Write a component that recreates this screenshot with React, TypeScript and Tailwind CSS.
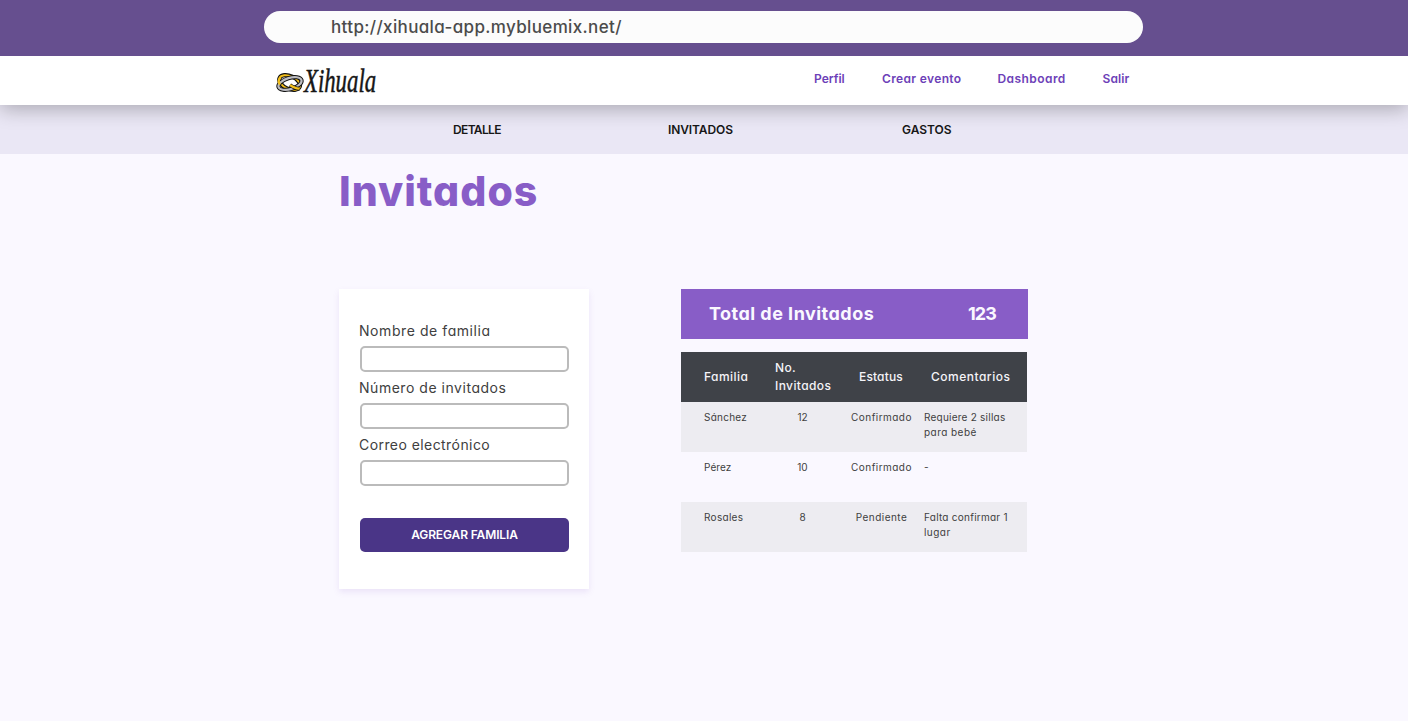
function RingsLogo() {
  return (
    <svg className="h-[42px] w-[116px]" viewBox="0 0 116 42" aria-label="Xihuala">
      <g fill="none" transform="translate(0 3.500)">
        <ellipse cx="14.6" cy="19" rx="11" ry="6.4" stroke="#111" strokeWidth="4.2" transform="rotate(24 14.6 19)" />
        <ellipse cx="14.6" cy="19" rx="11" ry="6.4" stroke="#f3bf1b" strokeWidth="2" transform="rotate(24 14.6 19)" />
        <ellipse cx="15" cy="20" rx="12" ry="5.6" stroke="#111" strokeWidth="4.2" transform="rotate(-17 15 20)" />
        <ellipse cx="15" cy="20" rx="12" ry="5.6" stroke="#bdbdc2" strokeWidth="2.2" transform="rotate(-17 15 20)" />
        <path d="M5.500 14C3 16.500 3 18.500 5 21" stroke="#f3bf1b" strokeWidth="2.2" />
        <path d="M15 21.500C18 23.500 21 25.500 24.500 25" stroke="#111" strokeWidth="3.8" />
        <path d="M15 21.500C18 23.500 21 25.500 24.500 25" stroke="#f3bf1b" strokeWidth="2.2" />
      </g>
      <text transform="translate(29 32) scale(0.69 1)" fontSize="33" fontStyle="italic" fill="#161616" stroke="#161616" strokeWidth="0.5" className="font-['Liberation_Serif',serif]">Xihuala</text>
    </svg>
  );
}

const rows = [
  { family: ["Sánchez", "tracking-[0.25px]"], count: "12", status: "Confirmado", note: ["Requiere 2 sillas", "tracking-[0.23px]"], rest: "para bebé" },
  { family: ["Pérez", "tracking-[0.05px]"], count: "10", status: "Confirmado", note: ["-", "tracking-normal"], rest: "" },
  { family: ["Rosales", "tracking-[0.3px]"], count: "8", status: "Pendiente", note: ["Falta confirmar 1", "tracking-[0.25px]"], rest: "lugar" },
];

const fields = [
  ["Nombre de familia", "tracking-[0.57px]"],
  ["Número de invitados", "tracking-[0.53px]"],
  ["Correo electrónico", "tracking-[0.43px]"],
];

const links = [
  ["Perfil", "w-[68px]"],
  ["Crear evento", "w-[115.5px] tracking-[0.35px]"],
  ["Dashboard", "w-[105px] tracking-[0.43px]"],
  ["Salir", "tracking-[0.1px]"],
];

export default function App() {
  return (
    <div className="min-h-screen bg-[#faf8ff] font-['Inter',sans-serif] [font-feature-settings:'cv11']">
      <div className="relative z-10 flex h-14 items-center bg-[#664f8f] pb-[2px] pl-[264px]">
        <div className="flex h-8 w-[879px] items-center rounded-full bg-[#fcfcfc] pt-[2px] pl-[67px] text-[17px] font-medium tracking-[0.36px] text-[#4b4b4b]">
          http://xihuala-app.mybluemix.net/
        </div>
      </div>
      <header className="relative flex h-[49px] bg-white pl-[275px] shadow-[0_4px_20px_rgba(0,0,0,0.28)]">
        <div className="w-[539px] pt-[4px]"><RingsLogo /></div>
        <nav className="flex pt-[14px] text-[12px] leading-[18px] font-semibold text-[#6d3fb8]">
          {links.map(([t, cls]) => <a key={t} className={cls}>{t}</a>)}
        </nav>
      </header>
      <nav className="flex h-[49px] items-center bg-[#eae7f5] pl-[453px] text-[12px] font-semibold text-[#171717]">
        <a className="w-[215px] tracking-[-0.65px]">DETALLE</a>
        <a className="w-[234px] tracking-[-0.1px]">INVITADOS</a>
        <a>GASTOS</a>
      </nav>
      <main className="pl-[339px]">
        <h1 className="h-[135px] pt-[13px] text-[41px] leading-[48px] font-extrabold tracking-[1px] text-[#885dc7]">Invitados</h1>
        <div className="flex gap-[92px]">
          <form className="h-[300px] w-[250px] bg-white px-5 pt-[31px] shadow-[0_3px_6px_rgba(136,93,199,0.13)]">
            {fields.map(([f, cls]) => (
              <label key={f} className="block h-[57px] text-[14px] leading-[22px] text-[#404040]">
                <span className={cls}>{f}</span>
                <input className="mt-[4px] ml-px block h-[26px] w-[209px] rounded-[5px] border-2 border-[#bbb]" />
              </label>
            ))}
            <button type="button" className="mt-[27px] ml-px h-[34px] w-[209px] rounded-[5px] bg-[#4a3587] text-[12px] font-semibold tracking-[-0.12px] text-white">AGREGAR FAMILIA</button>
          </form>
          <section>
            <div className="mb-[13px] flex h-[50px] w-[347px] items-center justify-between bg-[#885dc7] pr-8 pb-px pl-7 text-[18px] font-bold text-[#faf8ff]">
              <span className="tracking-[0.47px]">Total de Invitados</span>
              <span className="tracking-[-0.9px]">123</span>
            </div>
            <div className="flex h-[50px] w-[346px] items-center bg-[#3f4248] pl-[23px] text-[12px] leading-[18px] font-medium text-[#f5f4f8]">
              <div className="w-[71px] tracking-[0.45px]">Familia</div>
              <div className="w-[84px] tracking-[0.4px]">No.<br />Invitados</div>
              <div className="w-[72px] tracking-[0.15px]">Estatus</div>
              <div className="tracking-[0.5px]">Comentarios</div>
            </div>
            <div>
              {rows.map((r) => (
                <div key={r.count} className="flex h-[50px] w-[346px] pt-2 pl-[23px] text-[10px] leading-[15px] text-[#404040] odd:bg-[#edecf1]">
                  <div className={r.family[1]}><div className="w-[71px]">{r.family[0]}</div></div>
                  <div className="w-[55px] text-center">{r.count}</div>
                  <div className="ml-[14px] w-[75px] text-center tracking-[0.45px]">{r.status}</div>
                  <div className="ml-[5px]">
                    <div className={r.note[1]}>{r.note[0]}</div>
                    <div className="tracking-[0.45px]">{r.rest}</div>
                  </div>
                </div>
              ))}
            </div>
          </section>
        </div>
      </main>
    </div>
  );
}
